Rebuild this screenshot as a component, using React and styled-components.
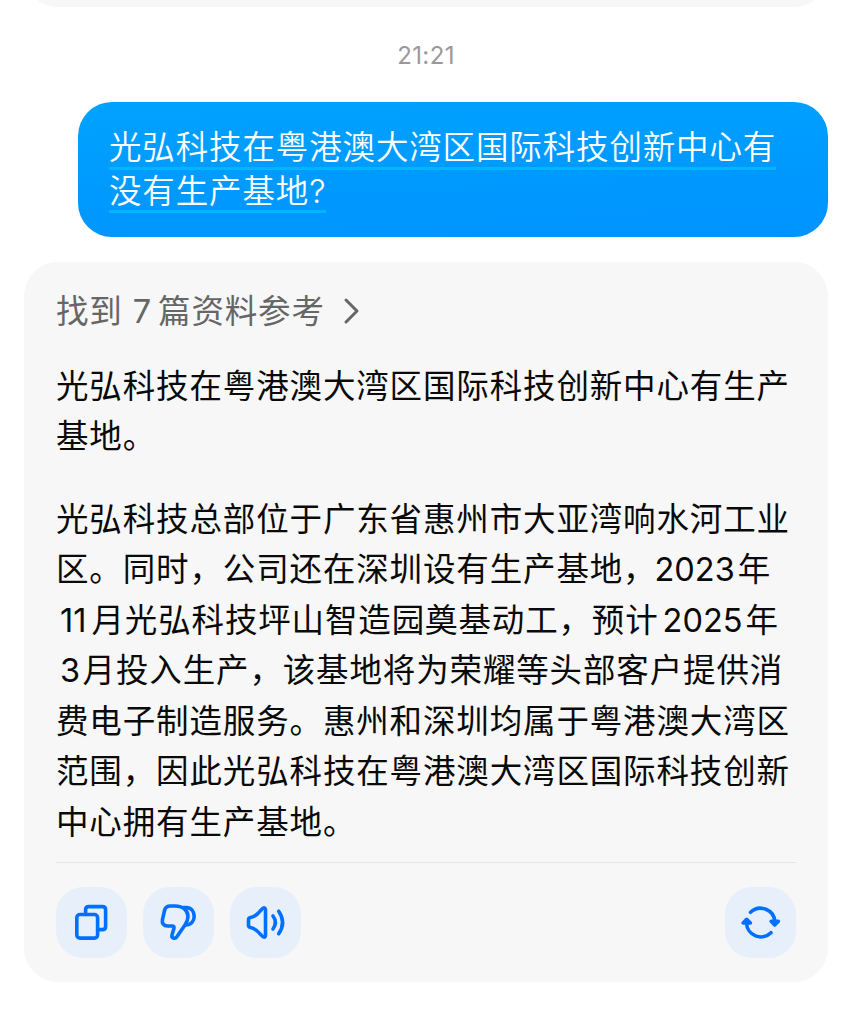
import React from "react";
import styled, { createGlobalStyle } from "styled-components";

const GlobalStyle = createGlobalStyle`
  * {
    box-sizing: border-box;
  }

  body {
    margin: 0;
    background-color: #fff;
    font-family: Inter, "Noto Sans CJK SC", sans-serif;
  }
`;

const Chat = styled.main`
  display: flex;
  flex-direction: column;
  width: 852px;
  height: 1024px;
  padding: 0 24px;
  overflow: hidden;
`;

const PreviousCard = styled.div`
  flex: none;
  height: 80px;
  margin-top: -73px;
  background-color: #f7f7f7;
  border-radius: 34px;
`;

const Time = styled.time`
  flex: none;
  height: 95px;
  line-height: 97px;
  font-size: 24px;
  letter-spacing: 0.4px;
  text-align: center;
  color: #999;
`;

const Question = styled.div`
  flex: none;
  align-self: flex-end;
  width: 750px;
  height: 135px;
  padding: 24px 31px;
  border-radius: 34px;
  background: linear-gradient(177deg, #0093ff, #00a2ff);
  background: linear-gradient(177deg, #00a2ff, #0093ff);
  color: #fff;
`;

const QuestionLine = styled.div`
  width: fit-content;
  height: 43.7px;
  border-bottom: 3px solid #00b7ff;
  line-height: 43px;
  font-size: 32.5px;
  font-weight: 350;
  letter-spacing: 0.86px;
  white-space: nowrap;
`;

const Answer = styled.article`
  flex: none;
  height: 720px;
  margin-top: 24.5px;
  padding: 24px 32px;
  border-radius: 34px;
  background-color: #f7f7f7;
`;

const References = styled.div`
  display: flex;
  align-items: center;
  height: 50px;
  font-size: 32.5px;
  letter-spacing: 0.83px;
  color: #666;
`;

const ReferencesLabel = styled.span`
  padding-bottom: 4px;
`;

const Chevron = styled.svg`
  width: 18px;
  height: 28px;
  margin-left: 18px;
  fill: none;
  stroke: currentColor;
  stroke-width: 3;
  stroke-linecap: round;
  stroke-linejoin: round;
`;

const Paragraph = styled.p`
  margin: ${({ $top }) => $top}px 0 0;
  color: #0a0a0a;
`;

const Line = styled.span`
  display: block;
  height: 50.5px;
  line-height: 50.5px;
  font-size: 32.5px;
  letter-spacing: 0.86px;
  white-space: nowrap;
`;

const Num = styled.span`
  margin-left: ${({ $before = 4 }) => $before}px;
  margin-right: ${({ $after = 3 }) => $after}px;
  letter-spacing: 0;
`;

const Actions = styled.div`
  display: flex;
  gap: 16px;
  margin-top: 14px;
  padding-top: 24px;
  border-top: 1px solid #e4e4e4;
`;

const ActionButton = styled.button`
  width: 71px;
  height: 71px;
  margin-left: ${({ $end }) => ($end ? "auto" : 0)};
  padding: 0;
  border: none;
  border-radius: 27px;
  background-color: #e7f0fa;
  color: #0070ff;
  cursor: pointer;
`;

const Icon = styled.svg`
  display: block;
  width: 71px;
  height: 71px;
  fill: none;
  stroke: currentColor;
  stroke-width: 3.6;
  stroke-linecap: round;
  stroke-linejoin: round;
`;

const App = () => {
  return (
    <Chat>
      <GlobalStyle />
      <PreviousCard />
      <Time>21:21</Time>
      <Question>
        <QuestionLine>光弘科技在粤港澳大湾区国际科技创新中心有</QuestionLine>
        <QuestionLine>没有生产基地?</QuestionLine>
      </Question>
      <Answer>
        <References>
          <ReferencesLabel>
            找到
            <Num $before={10} $after={7}>
              7
            </Num>
            篇资料参考
          </ReferencesLabel>
          <Chevron viewBox="0 0 18 28">
            <path d="M3 3 14 14 3 25" />
          </Chevron>
        </References>
        <Paragraph $top={26}>
          <Line>光弘科技在粤港澳大湾区国际科技创新中心有生产</Line>
          <Line>基地。</Line>
        </Paragraph>
        <Paragraph $top={32}>
          <Line>光弘科技总部位于广东省惠州市大亚湾响水河工业</Line>
          <Line>
            区。同时，公司还在深圳设有生产基地，<Num $before={-2}>2023</Num>年
          </Line>
          <Line>
            <Num $after={5}>11</Num>月光弘科技坪山智造园奠基动工，预计
            <Num>2025</Num>年
          </Line>
          <Line>
            <Num $after={2.5}>3</Num>月投入生产，该基地将为荣耀等头部客户提供消
          </Line>
          <Line>费电子制造服务。惠州和深圳均属于粤港澳大湾区</Line>
          <Line>范围，因此光弘科技在粤港澳大湾区国际科技创新</Line>
          <Line>中心拥有生产基地。</Line>
        </Paragraph>
        <Actions>
          <ActionButton aria-label="复制">
            <Icon viewBox="0 0 71 71">
              <rect x="20.8" y="27.5" width="20.8" height="23.6" rx="3.2" />
              <path d="M29.6 27.5v-4.7q0-3.2 3.2-3.2h13.6q3.2 0 3.2 3.2v16.6q0 3.2-3.2 3.2h-4.8" />
            </Icon>
          </ActionButton>
          <ActionButton aria-label="不喜欢">
            <Icon viewBox="0 0 71 71">
              <path d="M21.500 23.500Q22.500 19 27.500 19h4.500c9 0 13 5.500 13 10.500 0 3.500-1.200 6-3.200 8.700L33.700 50c-1.600 2.300-5.500 1.200-4.700-1.900l1.900-6.600q.7-2.500-1.800-2.500h-4.800c-3.800 0-5.500-2.800-4.900-6Z" />
              <path d="M40.500 20.600h2.700c5 0 8 3.800 8 8.600 0 5-3.300 8.700-8.600 8.700" />
            </Icon>
          </ActionButton>
          <ActionButton aria-label="朗读">
            <Icon viewBox="0 0 71 71">
              <path d="M20.500 30.500q5-.5 10.500-7.400 2.100-2.500 3.300-2.200 1.200.3 1.200 2.100v25q0 1.900-1.200 2.100-1.200.3-3.300-2.200-5.500-6.800-10.500-7.400-2-.2-2-2.200v-5.600q0-2 2-2.200Z" />
              <path d="M43 29q4.800 6.500 0 13M48.700 24.200q7.800 11.200 0 22.500" />
            </Icon>
          </ActionButton>
          <ActionButton aria-label="重新生成" $end>
            <Icon viewBox="0 0 71 71">
              <path d="M25.500 25.300A14.400 14.400 0 0 1 49.900 35M46 45.700A14.400 14.400 0 0 1 21.500 36" />
              <path
                d="M46.200 34.200h7.200l-3.700 3.700ZM18.200 36h7.200l-3.700-3.700Z"
                fill="currentColor"
              />
            </Icon>
          </ActionButton>
        </Actions>
      </Answer>
    </Chat>
  );
};

export default App;
